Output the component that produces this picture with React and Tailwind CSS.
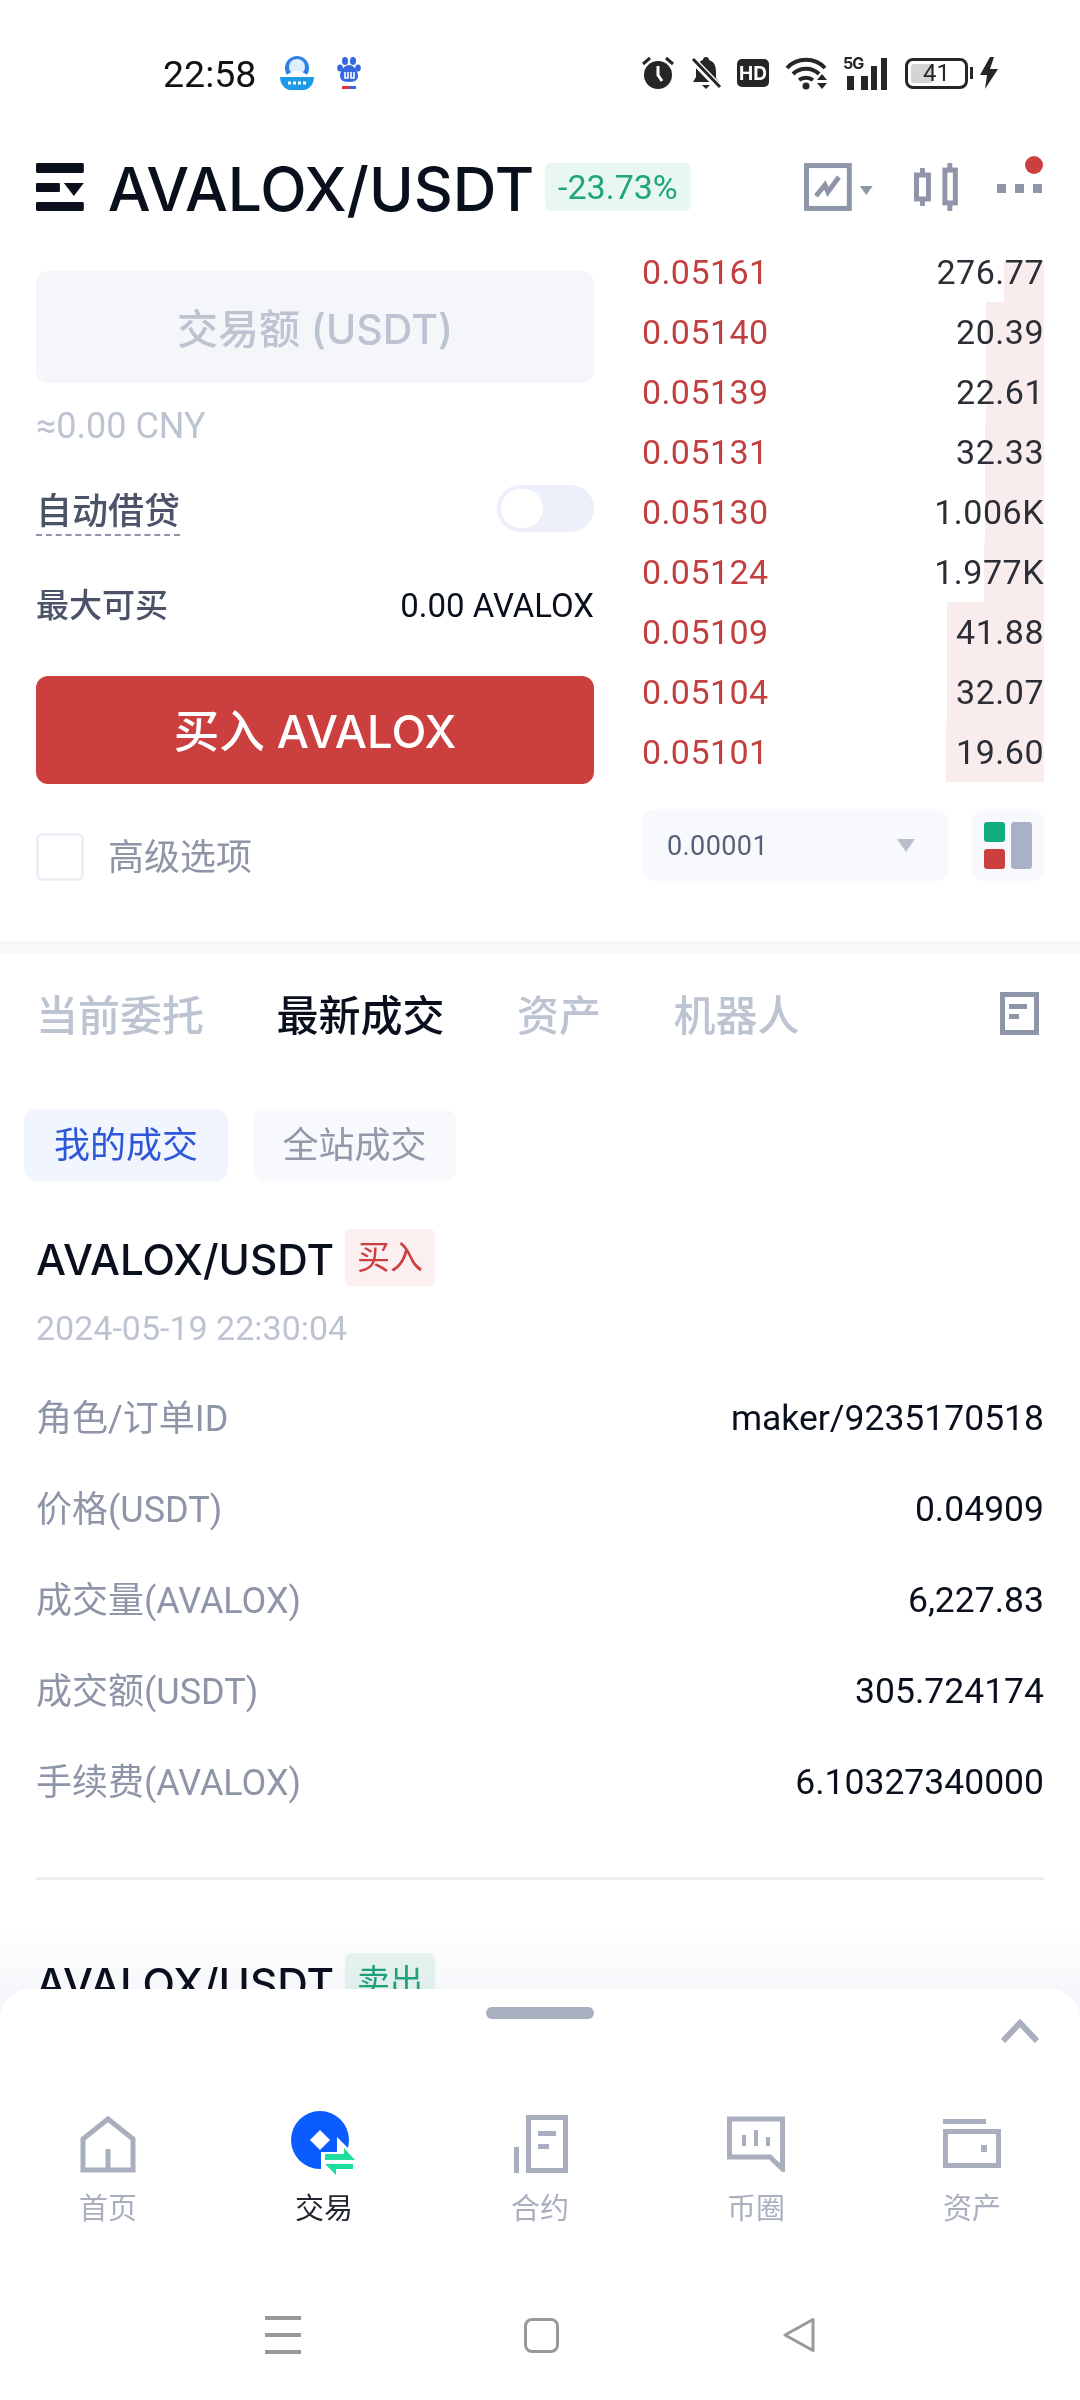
import React from 'react';

const asks = [
  { price: '0.05161', size: '276.77', bar: 40, top: 18 },
  { price: '0.05140', size: '20.39', bar: 58, top: 0 },
  { price: '0.05139', size: '22.61', bar: 58, top: 0 },
  { price: '0.05131', size: '32.33', bar: 59, top: 0 },
  { price: '0.05130', size: '1.006K', bar: 59, top: 0 },
  { price: '0.05124', size: '1.977K', bar: 60, top: 0 },
  { price: '0.05109', size: '41.88', bar: 97, top: 0 },
  { price: '0.05104', size: '32.07', bar: 97, top: 0 },
  { price: '0.05101', size: '19.60', bar: 98, top: 0 },
];

const details = [
  ['角色/订单ID', 'maker/9235170518'],
  ['价格(USDT)', '0.04909'],
  ['成交量(AVALOX)', '6,227.83'],
  ['成交额(USDT)', '305.724174'],
  ['手续费(AVALOX)', '6.10327340000'],
];

const StatusIcons = () => (
  <div className="flex items-center">
    {/* alarm */}
    <svg width="32" height="34" viewBox="0 0 32 34">
      <circle cx="16" cy="19" r="14" fill="#262626" />
      <path d="M16 10v9l4 6" stroke="#fff" strokeWidth="3" fill="none" />
      <path d="M1 8l7-6M31 8l-7-6" stroke="#262626" strokeWidth="3" />
    </svg>
    {/* muted bell */}
    <svg width="32" height="34" viewBox="0 0 32 34" className="ml-[16px]">
      <path d="M16 1a3 3 0 0 1 3 3c6 2 7 7 7 12v6l3 4H3l3-5v-7c0-5 2-8 7-10a3 3 0 0 1 3-3z" fill="#262626" />
      <path d="M12 29h8l-4 4z" fill="#262626" />
      <path d="M2 3l28 29" stroke="#fff" strokeWidth="7" />
      <path d="M3 3l27 28" stroke="#262626" strokeWidth="3" />
    </svg>
    {/* HD */}
    <div className="ml-[15px] flex h-[28px] w-[32px] items-center justify-center rounded-[5px] bg-[#262626] text-[19px] font-bold leading-none text-white">HD</div>
    {/* wifi */}
    <svg width="44" height="34" viewBox="0 0 44 34" className="ml-[16px]">
      <path d="M2 12c10-11 28-11 38 0M8 18c7-7 19-7 26 0M14 24c4-3 10-3 14 0" stroke="#262626" strokeWidth="4" fill="none" />
      <circle cx="21" cy="30" r="3.5" fill="#262626" />
      <path d="M37 18l5 6H32zM37 33l5-6H32z" fill="#262626" />
    </svg>
    {/* 5G signal */}
    <div className="relative ml-[14px] h-[34px] w-[46px]">
      <span className="absolute left-0 top-[-3px] text-[16px] font-bold leading-[20px] tracking-[-1px] text-[#262626]">5G</span>
      <svg width="46" height="34" viewBox="0 0 46 34" className="absolute left-0 top-0">
        <path d="M4 20h7v14H4zM18 20h7v14h-7zM28 10h6v24h-6zM38 2h6v32h-6z" fill="#262626" />
      </svg>
    </div>
    {/* battery */}
    <div className="relative ml-[16px] flex h-[31px] w-[63px] items-center justify-center rounded-[8px] border-[3px] border-[#262626] font-['Roboto',sans-serif] text-[24px] leading-none text-[#262626]">
      <div className="absolute bottom-[3px] left-[3px] top-[3px] w-[22px] rounded-[3px] bg-[#d4d4d4]" />
      <span className="relative">41</span>
    </div>
    <div className="ml-[2px] h-[12px] w-[3px] bg-[#262626]" />
    <svg width="20" height="32" viewBox="0 0 20 32" className="ml-[6px]">
      <path d="M11 0L1 18h7l-2 14L19 12h-8l4-12z" fill="#262626" />
    </svg>
  </div>
);

const StatusBar = () => (
  <div className="flex h-[144px] items-start pl-[163px] pr-[81px] pt-[55px]">
    <div className="flex w-full items-center justify-between">
      <div className="flex items-center">
        <span className="mt-[2px] font-['Roboto',sans-serif] text-[37.5px] leading-[34px] text-[#111]">22:58</span>
        <svg width="36" height="34" viewBox="0 0 36 34" className="ml-[23px]">
          <circle cx="18" cy="12" r="12" fill="#2f7fe8" />
          <circle cx="18" cy="11" r="8" fill="#dfeefc" />
          <path d="M5 22c4-5 9-7 13-7s9 2 13 7z" fill="#fff" />
          <path d="M1 21h34c0 8-6 13-10 13H11C7 34 1 29 1 21z" fill="#1e9be8" />
          <path d="M9 27h18" stroke="#fff" strokeWidth="3" strokeDasharray="3 2" />
        </svg>
        <svg width="24" height="32" viewBox="0 0 24 32" className="ml-[22px]">
          <g fill="#3468e0">
            <ellipse cx="8" cy="4" rx="3" ry="4" />
            <ellipse cx="16" cy="4" rx="3" ry="4" />
            <ellipse cx="3" cy="11" rx="2.8" ry="3.6" />
            <ellipse cx="21" cy="11" rx="2.8" ry="3.6" />
            <path d="M12 8c5 0 9 6 9 11 0 3-2 6-9 6s-9-3-9-6c0-5 4-11 9-11z" />
          </g>
          <path d="M8 15v6h3v-6M14 15v6h3v-6" stroke="#fff" strokeWidth="1.6" fill="none" />
          <path d="M5 29h8v3H5z" fill="#e0353a" />
          <path d="M13 29h6v3h-6z" fill="#3468e0" />
        </svg>
      </div>
      <StatusIcons />
    </div>
  </div>
);

const MenuGlyph = () => (
  <svg width="48" height="48" viewBox="0 0 48 48">
    <g fill="#0a0f1e">
      <rect x="0" y="0" width="48" height="10" rx="1.5" />
      <rect x="0" y="20" width="24" height="9" rx="1" />
      <path d="M28 20h20l-10 13z" />
      <rect x="0" y="39" width="48" height="9" rx="1.5" />
    </g>
  </svg>
);

const Header = () => (
  <div className="flex h-[86px] items-center pl-[36px] pr-[38px]">
    <MenuGlyph />
    <h1 className="ml-[24px] mt-[5px] text-[60.500px] font-medium leading-none text-[#0a0f1e]">AVALOX/USDT</h1>
    <div className="ml-[11px] flex h-[48px] w-[146px] items-center justify-center rounded-[6px] bg-[#e9f7f2] font-['Roboto',sans-serif] text-[34px] text-[#1fa67a]">-23.73%</div>
    <svg width="70" height="48" viewBox="0 0 70 48" className="ml-[113px]">
      <rect x="2.5" y="2.5" width="43" height="43" fill="none" stroke="#8f96aa" strokeWidth="5" />
      <path d="M12 33l9-11 3 7 11-15" stroke="#8f96aa" strokeWidth="5" fill="none" />
      <path d="M56 23h13l-6.500 9z" fill="#8f96aa" />
    </svg>
    <svg width="44" height="48" viewBox="0 0 44 48" className="ml-[41px]">
      <g stroke="#8f96aa" fill="none">
        <path d="M8.500 5v38" strokeWidth="5" />
        <rect x="2.500" y="12" width="12" height="24" strokeWidth="5" fill="#fff" />
        <path d="M36 0v48" strokeWidth="5" />
        <rect x="31" y="7" width="10.500" height="33" strokeWidth="5" fill="#fff" />
      </g>
    </svg>
    <div className="relative ml-[39px] h-[48px] w-[45px]">
      <div className="absolute left-0 top-[21px] flex gap-[9px]">
        <div className="h-[9px] w-[9px] bg-[#8f96aa]" />
        <div className="h-[9px] w-[9px] bg-[#8f96aa]" />
        <div className="h-[9px] w-[9px] bg-[#8f96aa]" />
      </div>
      <div className="absolute right-[-1px] top-[-7px] h-[18px] w-[18px] rounded-full bg-[#cb3f3f]" />
    </div>
  </div>
);

const OrderForm = () => (
  <div className="w-[558px] pt-[41px]">
    <div className="flex h-[112px] items-center justify-center rounded-[12px] bg-[#f5f6fa] pt-[5px] text-[41px] font-medium text-[#bcc3d1]">交易额 (USDT)</div>
    <div className="mt-[23px] h-[40px] font-['Roboto',sans-serif] text-[36px] leading-[40px] text-[#bcc3d1]">≈0.00 CNY</div>
    <div className="mt-[42px] flex h-[48px] items-center justify-between">
      <span className="border-b-2 border-dashed border-[#8e95a8] text-[36px] font-medium leading-[46px] text-[#4a5368]">自动借贷</span>
      <div className="-mt-[8px] flex h-[47px] w-[97px] items-center rounded-full bg-[#edf0fa] p-[4px]">
        <div className="h-[39px] w-[42px] rounded-full bg-white" />
      </div>
    </div>
    <div className="mt-[50px] flex h-[40px] items-center justify-between">
      <span className="text-[33px] font-medium text-[#4a5368]">最大可买</span>
      <span className="font-['Roboto',sans-serif] text-[33px] text-[#0a0f1e]">0.00 AVALOX</span>
    </div>
    <div className="mt-[50px] flex h-[108px] items-center justify-center rounded-[12px] bg-[#cb3f3f] pt-[5px] text-[45.500px] font-medium text-white">买入 AVALOX</div>
    <div className="mt-[46px] flex items-center">
      <div className="h-[48px] w-[48px] rounded-[6px] border-[3px] border-[#edf0f7]" />
      <span className="ml-[24px] text-[36px] text-[#8e95a6]">高级选项</span>
    </div>
  </div>
);

const OrderBook = () => (
  <div className="w-[402px] pt-[12px] font-['Roboto','Noto_Sans_CJK_SC',sans-serif]">
    {asks.map(row => (
      <div key={row.price} className="relative flex h-[60px] items-center justify-between text-[34px]">
        <div className="absolute bottom-0 right-0 bg-[#f9ecec]" style={{ width: row.bar, top: row.top }} />
        <span className="relative tracking-[0.4px] text-[#c23f3f]">{row.price}</span>
        <span className="relative tracking-[0.5px] text-[#2b2e36]">{row.size}</span>
      </div>
    ))}
    <div className="mt-[27px] flex justify-between">
      <div className="flex h-[72px] w-[306px] items-center justify-between rounded-[12px] bg-[#f8f9fd] pl-[25px] pr-[33px]">
        <span className="pt-[2px] text-[27px] tracking-[0.4px] text-[#566077]">0.00001</span>
        <svg width="18" height="13" viewBox="0 0 18 13"><path d="M0 0h18L9 13z" fill="#b8bfcd" /></svg>
      </div>
      <div className="flex h-[72px] w-[72px] items-center justify-center gap-[6px] rounded-[12px] bg-[#f8f9fd]">
        <div className="flex flex-col gap-[7px]">
          <div className="h-[20px] w-[21px] rounded-[3px] bg-[#13ad7d]" />
          <div className="h-[20px] w-[21px] rounded-[3px] bg-[#cb3f3f]" />
        </div>
        <div className="h-[47px] w-[21px] rounded-[3px] bg-[#a9b1c9]" />
      </div>
    </div>
  </div>
);

const TabsRow = () => (
  <div className="flex h-[120px] items-center justify-between pl-[36px] pr-[41px]">
    <div className="flex gap-[72.500px] pt-[5px] text-[42px] font-medium text-[#bcc3d1]">
      <span>当前委托</span>
      <span className="text-[#0a0f1e]">最新成交</span>
      <span>资产</span>
      <span>机器人</span>
    </div>
    <svg width="39" height="43" viewBox="0 0 39 43">
      <rect x="2.500" y="2.500" width="34" height="38" fill="none" stroke="#8e95a8" strokeWidth="5" />
      <path d="M9 12h18v5H9zM9 22h10v5H9z" fill="#8e95a8" />
    </svg>
  </div>
);

const TradeCard = ({ side, tagClass }) => (
  <div className="px-[36px]">
    <div className="flex h-[57px] items-center">
      <span className="mt-[5px] text-[42.300px] font-medium leading-none text-[#0a0f1e]">AVALOX/USDT</span>
      <span className={`ml-[11px] flex h-[57px] w-[90px] items-center justify-center rounded-[6px] text-[33px] ${tagClass}`}>{side}</span>
    </div>
  </div>
);

const BottomNavIcons = {
  home: (
    <svg width="56" height="58" viewBox="0 0 56 58">
      <path d="M3 55V24L28 4l25 20v31zM28 55V34" fill="none" stroke="#a9afbe" strokeWidth="5" />
    </svg>
  ),
  trade: (
    <svg width="66" height="66" viewBox="0 0 66 66">
      <circle cx="29" cy="29" r="29" fill="#0a5cff" />
      <path d="M29 19l10 10-10 10-10-10z" fill="#fff" />
      <path d="M30 41H46V26L66 46V58L46 66H30z" fill="#fff" />
      <path d="M53 37L64 49H34V43H53z" fill="#1fdc9f" />
      <path d="M34 53H62V58H45V64z" fill="#1fdc9f" />
    </svg>
  ),
  contract: (
    <svg width="56" height="58" viewBox="0 0 56 58">
      <rect x="16.500" y="2.500" width="37" height="53" fill="none" stroke="#a9afbe" strokeWidth="5" />
      <path d="M2 32h5v26H2zM26 16h18v5H26zM26 29h11v5H26z" fill="#a9afbe" />
    </svg>
  ),
  feed: (
    <svg width="58" height="56" viewBox="0 0 58 56">
      <path d="M2.500 3h53v50L43 41H2.500z" fill="none" stroke="#a9afbe" strokeWidth="5" />
      <path d="M15 19h4v11h-4zM27 14h4v16h-4zM39 21h4v9h-4z" fill="#a9afbe" />
    </svg>
  ),
  wallet: (
    <svg width="58" height="50" viewBox="0 0 58 50">
      <path d="M0 0h43v5H0z" fill="#a9afbe" />
      <rect x="2.500" y="12.500" width="53" height="34" fill="none" stroke="#a9afbe" strokeWidth="5" />
      <path d="M38 26h6v7h-6z" fill="#a9afbe" />
    </svg>
  ),
};

const navItems = [
  { key: 'home', label: '首页' },
  { key: 'trade', label: '交易', active: true },
  { key: 'contract', label: '合约' },
  { key: 'feed', label: '币圈' },
  { key: 'wallet', label: '资产' },
];

const BottomSheet = () => (
  <div className="absolute inset-x-0 bottom-0 h-[411px] rounded-t-[30px] bg-white">
    <div className="absolute inset-x-0 -top-[64px] h-[94px] bg-gradient-to-b from-white to-[#f3f4f9] mix-blend-multiply" />
    <div className="absolute inset-0 rounded-t-[30px] bg-white" />
    <div className="relative">
      <div className="mx-auto mt-[18px] h-[12px] w-[108px] rounded-full bg-[#a9afbe]" />
      <div className="flex justify-end pr-[40px]">
        <svg width="40" height="24" viewBox="0 0 40 24"><path d="M3 22L20 4l17 18" fill="none" stroke="#a9afbe" strokeWidth="6" /></svg>
      </div>
      <div className="mt-[70px] grid grid-cols-5">
        {navItems.map(item => (
          <div key={item.key} className="flex flex-col items-center">
            <div className="flex h-[62px] items-center justify-center">{BottomNavIcons[item.key]}</div>
            <span className={`mt-[16px] text-[29px] leading-[36px] ${item.active ? 'text-[#22262f]' : 'text-[#a9afbe]'}`}>{item.label}</span>
          </div>
        ))}
      </div>
      <div className="mt-[89px] flex items-center justify-center gap-[223px]">
        <div className="flex w-[36px] flex-col gap-[13px]">
          <div className="h-[4px] bg-[#999]" />
          <div className="h-[4px] bg-[#999]" />
          <div className="h-[4px] bg-[#999]" />
        </div>
        <div className="h-[35px] w-[35px] rounded-[8px] border-[3px] border-[#999]" />
        <svg width="34" height="36" viewBox="0 0 34 36"><path d="M31 2.500v31L3 18z" fill="none" stroke="#999" strokeWidth="3" strokeLinejoin="round" /></svg>
      </div>
    </div>
  </div>
);

export default function App() {
  return (
    <div className="relative h-[2400px] w-[1080px] overflow-hidden bg-white font-['Inter','Noto_Sans_CJK_SC',sans-serif]">
      <StatusBar />
      <Header />
      <div className="flex h-[711px] justify-between px-[36px]">
        <OrderForm />
        <OrderBook />
      </div>
      <div className="h-[12px] bg-[#f7f8fa]" />
      <TabsRow />
      <div className="mt-[36px] flex gap-[25px] pl-[24px] text-[36px]">
        <div className="flex h-[72px] w-[204px] items-center justify-center rounded-[12px] bg-[#f0f5fe] text-[#2d57d8]">我的成交</div>
        <div className="flex h-[72px] w-[203px] items-center justify-center rounded-[12px] bg-[#f8f9fd] text-[#9299aa]">全站成交</div>
      </div>
      <div className="mt-[48px]">
        <TradeCard side="买入" tagClass="bg-[#fbefef] text-[#cb3f3f]" />
        <div className="mt-[22px] px-[36px] font-['Roboto',sans-serif] text-[34px] leading-[40px] text-[#bcc3d1]">2024-05-19 22:30:04</div>
        <div className="mt-[25px] px-[36px] font-['Roboto','Noto_Sans_CJK_SC',sans-serif]">
          {details.map(([label, value]) => (
            <div key={label} className="flex h-[91px] items-center justify-between">
              <span className="text-[36px] text-[#8e95a8]">{label}</span>
              <span className="text-[35.500px] text-[#0a0f1e]">{value}</span>
            </div>
          ))}
        </div>
        <div className="mx-[36px] mt-[49px] h-[3px] bg-[#eef0f6]" />
        <div className="mt-[73px]">
          <TradeCard side="卖出" tagClass="bg-[#e8f6f1] text-[#1fa67a]" />
        </div>
      </div>
      <BottomSheet />
    </div>
  );
}
